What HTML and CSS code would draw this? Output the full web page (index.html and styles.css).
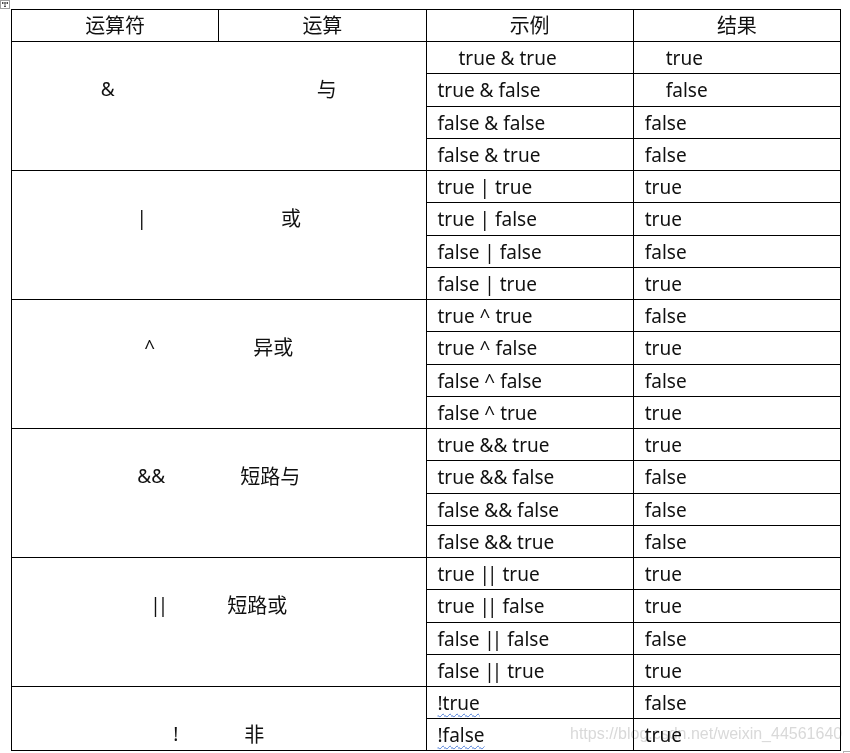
FILE: index.html
```html
<!DOCTYPE html>
<html lang="zh">
<head>
<meta charset="utf-8">
<title>运算符</title>
<link rel="stylesheet" href="styles.css">
</head>
<body>
<div class="page">
  <span class="move-handle"><svg width="10" height="9" viewBox="0 0 10 9"><rect x="0.5" y="0.5" width="9" height="8" fill="#fff" stroke="#a0a0a0"/><path d="M2 3H8M5 2V7M4 6L5 7L6 6M3 2L2 3L3 4M7 2L8 3L7 4" stroke="#333" fill="none" stroke-width="0.8"/></svg></span>
  <table class="ops">
    <colgroup><col><col><col><col></colgroup>
    <thead>
      <tr class="h"><th>运算符</th><th>运算</th><th>示例</th><th>结果</th></tr>
    </thead>
    <tbody>
      <tr class="r32"><td class="grp" rowspan="4" colspan="2"><div class="pair g1"><span>&amp;</span><span class="zh">与</span></div></td><td class="ind">true &amp; true</td><td class="ind">true</td></tr>
      <tr class="r33"><td>true &amp; false</td><td class="ind">false</td></tr>
      <tr class="r32"><td>false &amp; false</td><td>false</td></tr>
      <tr class="r32"><td>false &amp; true</td><td>false</td></tr>

      <tr class="r32"><td class="grp" rowspan="4" colspan="2"><div class="pair g2"><span>|</span><span class="zh">或</span></div></td><td>true | true</td><td>true</td></tr>
      <tr class="r33"><td>true | false</td><td>true</td></tr>
      <tr class="r32"><td>false | false</td><td>false</td></tr>
      <tr class="r32"><td>false | true</td><td>true</td></tr>

      <tr class="r32"><td class="grp" rowspan="4" colspan="2"><div class="pair g3"><span>^</span><span class="zh">异或</span></div></td><td>true ^ true</td><td>false</td></tr>
      <tr class="r33"><td>true ^ false</td><td>true</td></tr>
      <tr class="r32"><td>false ^ false</td><td>false</td></tr>
      <tr class="r32"><td>false ^ true</td><td>true</td></tr>

      <tr class="r32"><td class="grp" rowspan="4" colspan="2"><div class="pair g4"><span>&amp;&amp;</span><span class="zh">短路与</span></div></td><td>true &amp;&amp; true</td><td>true</td></tr>
      <tr class="r33"><td>true &amp;&amp; false</td><td>false</td></tr>
      <tr class="r32"><td>false &amp;&amp; false</td><td>false</td></tr>
      <tr class="r32"><td>false &amp;&amp; true</td><td>false</td></tr>

      <tr class="r32"><td class="grp" rowspan="4" colspan="2"><div class="pair g5"><span class="bars">||</span><span class="zh">短路或</span></div></td><td>true <span class="bars">||</span> true</td><td>true</td></tr>
      <tr class="r33"><td>true <span class="bars">||</span> false</td><td>true</td></tr>
      <tr class="r32"><td>false <span class="bars">||</span> false</td><td>false</td></tr>
      <tr class="r32"><td>false <span class="bars">||</span> true</td><td>true</td></tr>

      <tr class="r32"><td class="grp" rowspan="2" colspan="2"><div class="pair g6"><span>!</span><span class="zh">非</span></div></td><td><span class="spell">!true</span></td><td>false</td></tr>
      <tr class="r32"><td><span class="spell">!false</span></td><td>true</td></tr>
    </tbody>
  </table>
  <span class="watermark">https://blog.csdn.net/weixin_44561640</span>
  <span class="resize-handle"></span>
</div>
</body>
</html>
```

FILE: styles.css
```css
html, body {
  margin: 0;
  padding: 0;
  background: #fff;
}

.page {
  position: relative;
  width: 850px;
  height: 753px;
  padding: 9px 0 0 11px;
  box-sizing: border-box;
  font-family: "Noto Sans", "Noto Sans CJK SC", sans-serif;
  color: #111;
}

.move-handle {
  position: absolute;
  left: 0;
  top: 0;
  line-height: 0;
}

.ops {
  border-collapse: collapse;
  table-layout: fixed;
  width: 830px;
  font-size: 19px;
}

.ops col {
  width: 207.25px;
}

.ops th,
.ops td {
  border: 1px solid #000;
  padding: 0 0 0 11px;
  text-align: left;
  vertical-align: middle;
  white-space: nowrap;
  line-height: 24px;
}

.ops th {
  font-weight: normal;
  text-align: center;
  padding: 0 0 2px 0;
  font-family: "Noto Sans CJK SC", sans-serif;
  font-size: 20px;
}

.ops tr.h { height: 32px; }
.ops tr.r32 { height: 32px; }
.ops tr.r33 { height: 33px; }

.ops td.ind {
  padding-left: 32px;
}

.ops td.grp {
  vertical-align: top;
  padding: 33px 0 0 0;
}

.pair {
  display: flex;
  justify-content: center;
  align-items: center;
  height: 28px;
}

.zh {
  font-family: "Noto Sans CJK SC", sans-serif;
  font-size: 20px;
}

.bars {
  letter-spacing: -3px;
  margin-right: 3px;
}

.g1 { gap: 202px; }
.g2 { gap: 134px; }
.g3 { gap: 98px; }
.g4 { gap: 75px; }
.g5 { gap: 59px; }
.g6 { gap: 66px; }

.spell {
  text-decoration: underline wavy #4a7bd8;
  text-decoration-thickness: 1px;
  text-underline-offset: 3px;
}

.watermark {
  position: absolute;
  left: 570px;
  top: 725px;
  font-family: "Liberation Sans", Arial, sans-serif;
  font-size: 16px;
  color: #d9d9d9;
  mix-blend-mode: multiply;
  white-space: nowrap;
}

.resize-handle {
  position: absolute;
  left: 843px;
  top: 751px;
  width: 8px;
  height: 8px;
  border: 1px solid #b0b0b0;
  background: #fff;
}
```
